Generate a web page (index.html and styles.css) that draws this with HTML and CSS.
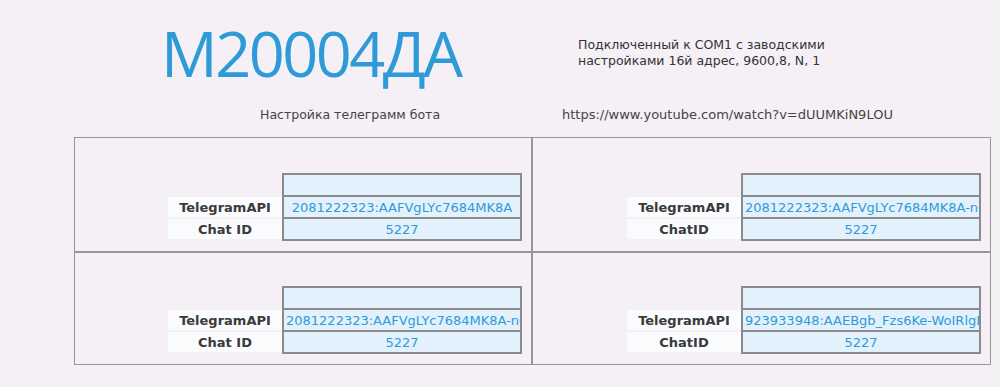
FILE: index.html
```html
<!DOCTYPE html>
<html lang="ru">
<head>
    <meta charset="UTF-8">
    <title>M20004ДА</title>
    <link rel="stylesheet" href="styles.css">
</head>
<body>
    <div class="page">
        <div class="header">
            <h1 class="title">M20004ДА</h1>
            <div class="info">Подключенный к COM1 с заводскими<br>настройками 16й адрес, 9600,8, N, 1</div>
        </div>

        <div class="links">
            <div class="links-left">Настройка телеграмм бота</div>
            <div class="links-right">https://www.youtube.com/watch?v=dUUMKiN9LOU</div>
        </div>

        <div class="bots">
            <div class="bot">
                <table class="bot-table">
                    <tr><td class="label empty"></td><td class="value"></td></tr>
                    <tr><td class="label">TelegramAPI</td><td class="value">2081222323:AAFVgLYc7684MK8A</td></tr>
                    <tr><td class="label">Chat ID</td><td class="value">5227</td></tr>
                </table>
            </div>
            <div class="bot">
                <table class="bot-table">
                    <tr><td class="label empty"></td><td class="value"></td></tr>
                    <tr><td class="label">TelegramAPI</td><td class="value long">2081222323:AAFVgLYc7684MK8A-nO</td></tr>
                    <tr><td class="label">ChatID</td><td class="value">5227</td></tr>
                </table>
            </div>
            <div class="bot">
                <table class="bot-table">
                    <tr><td class="label empty"></td><td class="value"></td></tr>
                    <tr><td class="label">TelegramAPI</td><td class="value long">2081222323:AAFVgLYc7684MK8A-nO</td></tr>
                    <tr><td class="label">Chat ID</td><td class="value">5227</td></tr>
                </table>
            </div>
            <div class="bot">
                <table class="bot-table">
                    <tr><td class="label empty"></td><td class="value"></td></tr>
                    <tr><td class="label">TelegramAPI</td><td class="value long">923933948:AAEBgb_Fzs6Ke-WoIRlgIq</td></tr>
                    <tr><td class="label">ChatID</td><td class="value">5227</td></tr>
                </table>
            </div>
        </div>
    </div>
</body>
</html>
```

FILE: styles.css
```css
body {
    margin: 0;
    background: #f4f0f6;
    font-family: "DejaVu Sans", sans-serif;
    font-size: 13px;
    color: #333;
}

.page {
    width: 917px;
    margin-left: 74px;
}

.header {
    display: grid;
    grid-template-columns: 458px 459px;
    height: 100px;
}

.title {
    margin: 8px 0 0 87px;
    font-family: "Open Sans", sans-serif;
    font-weight: 400;
    font-size: 63px;
    letter-spacing: -2.5px;
    line-height: 90px;
    color: #2e9bd8;
}

.info {
    padding: 37px 0 0 46px;
    font-size: 12.5px;
    line-height: 16px;
    color: #333;
}

.links {
    display: grid;
    grid-template-columns: 458px 459px;
    height: 37px;
    line-height: 30px;
    color: #444;
}

.links-left {
    padding-left: 186px;
    font-size: 12.5px;
}

.links-right {
    padding-left: 30px;
}

.bots {
    display: grid;
    grid-template-columns: 458px 459px;
    grid-template-rows: 115px 113px;
}

.bot {
    border: 1px solid #98969a;
    display: flex;
    justify-content: flex-end;
    align-items: flex-end;
    padding: 0 9px 10px 0;
}

.bot-table {
    border-collapse: separate;
    border-spacing: 0;
    table-layout: fixed;
    width: 354px;
}

.bot-table td {
    box-sizing: border-box;
    height: 22px;
    padding: 0;
    text-align: center;
}

.label {
    width: 114px;
    background: #fafbfd;
    border-bottom: 2px solid #f4f0f6;
    font-weight: bold;
    color: #3a3a3a;
}

.label.empty {
    background: none;
}

.value {
    width: 240px;
    background: #e3f1fc;
    border: 2px solid #8b8b8b;
    border-top-width: 0;
    color: #2e9bd8;
    white-space: nowrap;
    overflow: hidden;
}

.bot-table tr:first-child td {
    height: 24px;
}

.bot-table tr:first-child .value {
    border-top-width: 2px;
}

.value.long {
    text-align: left;
    padding-left: 2px;
}
```
